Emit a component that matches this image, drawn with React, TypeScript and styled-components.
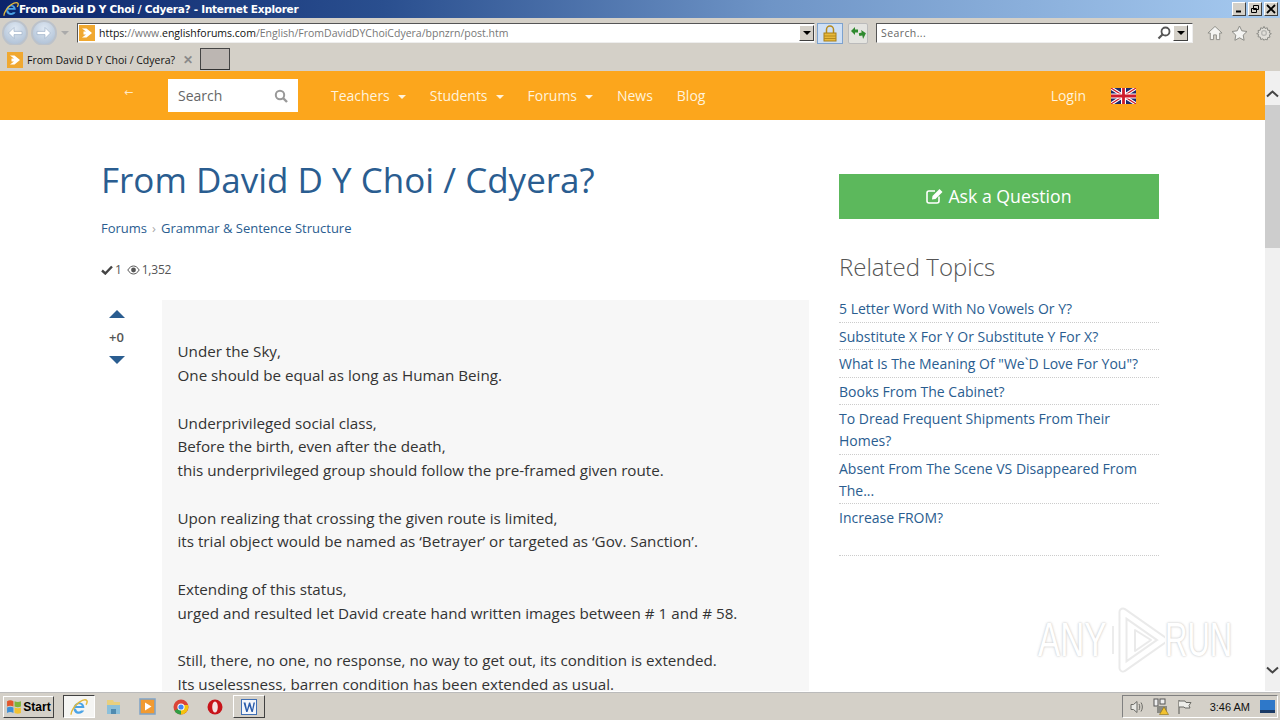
import React from "react";
import styled, { createGlobalStyle } from "styled-components";

const GlobalStyle = createGlobalStyle`
  html, body { margin: 0; padding: 0; height: 100%; overflow: hidden; background: #fff; }
  * { box-sizing: border-box; }
`;

const blue = "#2a5d90";

const Screen = styled.div`
  position: relative;
  width: 1280px;
  height: 720px;
  display: flex;
  flex-direction: column;
  overflow: hidden;
  font-family: "Open Sans", sans-serif;
`;

const TitleBar = styled.div`
  height: 18px;
  flex: none;
  display: flex;
  align-items: center;
  padding: 0 2px 0 3px;
  background: linear-gradient(90deg, #0b246b 0%, #2a4f8f 30%, #6e94c6 60%, #a6caf0 100%);
`;

const TitleText = styled.span`
  flex: 1;
  font: bold 10.5px "DejaVu Sans", sans-serif;
  letter-spacing: -0.27px;
  color: #fff;
  white-space: nowrap;
`;

const WinButtons = styled.div`
  display: flex;
  gap: 2px;
`;

const WinButton = styled.div`
  width: 14px;
  height: 14px;
  background: #d4d0c8;
  border: 1px solid;
  border-color: #fff #404040 #404040 #fff;
  display: flex;
  align-items: center;
  justify-content: center;
`;

const AddressRow = styled.div`
  height: 27px;
  flex: none;
  display: flex;
  align-items: center;
  background: #d4d0c8;
  padding: 3px 3px 0 2px;
`;

const NavButton = styled.div`
  width: 26px;
  height: 26px;
  flex: none;
  border-radius: 50%;
  margin-right: 3px;
  display: flex;
  align-items: center;
  justify-content: center;
  border: 2px solid #bcc2ca;
  background: radial-gradient(circle at 50% 30%, #dfe8f2, #a8bbd2);
`;

const SmallCaret = styled.div`
  width: 0;
  height: 0;
  margin: 0 8px 0 1px;
  border-left: 4px solid transparent;
  border-right: 4px solid transparent;
  border-top: 4px solid #aaa;
`;

const Field = styled.div<{ $width: number }>`
  width: ${(p) => p.$width}px;
  height: 20px;
  flex: none;
  display: flex;
  align-items: center;
  background: #fff;
  border: 1px solid;
  border-color: #555 #eee #eee #555;
`;

const Favicon = styled.div`
  width: 16px;
  height: 16px;
  flex: none;
  margin-left: 1px;
  background: #f0a830;
  display: flex;
  align-items: center;
  justify-content: center;
`;

const UrlText = styled.div`
  flex: 1;
  margin-left: 4px;
  font: 10.5px "Open Sans", sans-serif;
  color: #777;
  white-space: nowrap;
  overflow: hidden;
  b {
    font-weight: 400;
    color: #111;
  }
`;

const DropButton = styled.div<{ $inset?: number }>`
  width: 15px;
  height: 16px;
  flex: none;
  margin-right: ${(p) => p.$inset ?? 0}px;
  background: #d4d0c8;
  border: 1px solid;
  border-color: #fff #404040 #404040 #fff;
  display: flex;
  align-items: center;
  justify-content: center;
  &::after {
    content: "";
    border-left: 4px solid transparent;
    border-right: 4px solid transparent;
    border-top: 4px solid #000;
  }
`;

const LockTile = styled.div`
  width: 26px;
  height: 21px;
  margin: 0 5px 0 2px;
  flex: none;
  display: flex;
  align-items: center;
  justify-content: center;
  background: #cfe0f5;
  border: 1px solid #7da2ce;
`;

const RefreshTile = styled.div`
  width: 20px;
  height: 21px;
  margin-right: 8px;
  flex: none;
  display: flex;
  align-items: center;
  justify-content: center;
  background: #e4e4e0;
  border: 1px solid #bbb;
  border-radius: 2px;
`;

const SearchHint = styled.span`
  flex: 1;
  margin-left: 4px;
  font: 10.5px "Open Sans", sans-serif;
  letter-spacing: 0.4px;
  color: #666;
`;

const ToolIcons = styled.div`
  display: flex;
  align-items: center;
  gap: 8px;
  margin-left: 14px;
`;

const TabRow = styled.div`
  height: 26px;
  flex: none;
  display: flex;
  align-items: flex-end;
  background: #d4d0c8;
  padding: 0 0 1px 6px;
`;

const Tab = styled.div`
  height: 24px;
  width: 194px;
  display: flex;
  align-items: center;
  padding-top: 4px;
`;

const TabLabel = styled.span`
  margin-left: 4px;
  flex: 1;
  font: 10.5px "Open Sans", sans-serif;
  color: #111;
  white-space: nowrap;
`;

const TabClose = styled.span`
  margin-right: 7px;
  font: bold 12px "Liberation Sans", sans-serif;
  color: #8a8a8a;
`;

const NewTab = styled.div`
  width: 30px;
  height: 22px;
  background: #bcb6b2;
  border: 1px solid;
  border-color: #444 #444 #333 #444;
`;

const Viewport = styled.div`
  flex: 1;
  min-height: 0;
  display: flex;
`;

const Page = styled.div`
  flex: 1;
  min-width: 0;
  overflow: hidden;
  background: #fff;
`;

const Header = styled.header`
  height: 49px;
  display: flex;
  align-items: center;
  background: #fca61c;
  padding-left: 124px;
  padding-right: 129px;
`;

const BackArrow = styled.span`
  width: 44px;
  font: 11px "DejaVu Sans", sans-serif;
  margin-top: -6px;
  color: #ffe9c4;
`;

const SearchBox = styled.div`
  width: 130px;
  height: 33px;
  display: flex;
  align-items: center;
  justify-content: space-between;
  padding: 0 10px;
  background: #fff;
  font-size: 14px;
  color: #666;
`;

const Nav = styled.nav`
  flex: 1;
  display: flex;
  align-items: center;
  gap: 24px;
  margin-left: 33px;
`;

const NavItem = styled.span`
  display: flex;
  align-items: center;
  font-size: 14px;
  letter-spacing: -0.02px;
  color: #fff3dc;
  &[data-caret="true"]::after {
    content: "";
    margin-left: 8px;
    margin-top: 2px;
    border-left: 4px solid transparent;
    border-right: 4px solid transparent;
    border-top: 4px solid #fff3dc;
  }
`;

const Login = styled(NavItem)`
  margin-right: 25px;
`;

const Content = styled.div`
  display: flex;
  padding: 34px 0 0 101px;
`;

const Main = styled.main`
  width: 708px;
  flex: none;
`;

const Title = styled.h1`
  margin: 1px 0 0;
  font-size: 35px;
  font-weight: 400;
  line-height: 50px;
  color: ${blue};
  white-space: nowrap;
`;

const Crumbs = styled.div`
  display: flex;
  align-items: center;
  margin-top: 13px;
  font-size: 13px;
  line-height: 20px;
  color: ${blue};
`;

const CrumbSep = styled.span`
  margin: 0 5px;
  font-size: 13px;
  color: #aaa;
`;

const Stats = styled.div`
  display: flex;
  align-items: center;
  margin-top: 22px;
  font-size: 12px;
  line-height: 20px;
  letter-spacing: -0.2px;
  color: #555;
  svg {
    margin-right: 2px;
  }
  span {
    margin-right: 5px;
  }
`;

const Post = styled.div`
  display: flex;
  margin-top: 20px;
`;

const Votes = styled.div`
  width: 61px;
  flex: none;
  padding: 10px 30px 0 0;
  display: flex;
  flex-direction: column;
  align-items: center;
`;

const VoteArrow = styled.div<{ $down?: boolean }>`
  width: 0;
  height: 0;
  border-left: 8px solid transparent;
  border-right: 8px solid transparent;
  ${(p) =>
    p.$down
      ? `border-top: 8px solid ${blue};`
      : `border-bottom: 8px solid ${blue};`}
`;

const Score = styled.div`
  margin: 9px 0 9px;
  font-size: 13px;
  font-weight: 600;
  line-height: 20px;
  color: #555;
`;

const PostBody = styled.div`
  flex: 1;
  min-height: 420px;
  padding: 40.4px 16px 0 15.5px;
  background: #f7f7f7;
  font-size: 15.2px;
  line-height: 23.75px;
  color: #333;
`;

const Stanza = styled.p`
  margin: 0 0 23.75px;
  white-space: nowrap;
`;

const Side = styled.aside`
  width: 320px;
  margin-left: 30px;
  padding-top: 20px;
  flex: none;
`;

const AskButton = styled.div`
  height: 45px;
  display: flex;
  align-items: center;
  justify-content: center;
  gap: 4px;
  padding-bottom: 2px;
  background: #5cb85c;
  font-size: 17.7px;
  color: #fff;
`;

const SideTitle = styled.h2`
  margin: 28px 0 8px;
  font-size: 24px;
  font-weight: 300;
  line-height: 40px;
  color: #555;
`;

const TopicList = styled.ul`
  margin: 0;
  padding: 0 0 24px;
  list-style: none;
  border-bottom: 1px dotted #ccc;
`;

const Topic = styled.li`
  padding: 3px 0 1.5px;
  font-size: 14px;
  line-height: 22px;
  color: ${blue};
  border-bottom: 1px dotted #ccc;
  &:last-child {
    border-bottom: 0;
  }
`;

const ScrollBar = styled.div`
  width: 15px;
  flex: none;
  display: flex;
  flex-direction: column;
  align-items: center;
  background: #f0f0f0;
`;

const ScrollEnd = styled.div<{ $bottom?: boolean }>`
  height: 34px;
  flex: none;
  display: flex;
  align-items: center;
  justify-content: center;
  ${(p) => (p.$bottom ? "padding-bottom: 8px;" : "padding-top: 12px;")}
`;

const ScrollThumb = styled.div`
  width: 15px;
  height: 143px;
  flex: none;
  background: #cdcdcd;
`;

const ScrollFill = styled.div`
  flex: 1;
`;

const Taskbar = styled.footer`
  height: 29px;
  flex: none;
  display: flex;
  align-items: center;
  padding: 1px 2px 0 3px;
  background: #d4d0c8;
  border-top: 1px solid #fff;
  box-shadow: inset 0 1px 0 #bbb;
`;

const StartButton = styled.div`
  width: 51px;
  height: 22px;
  display: flex;
  align-items: center;
  justify-content: center;
  gap: 1px;
  margin-right: 8px;
  background: #d4d0c8;
  border: 1px solid;
  border-color: #fff #404040 #404040 #fff;
  font: bold 12px "Liberation Sans", sans-serif;
  color: #000;
`;

const TaskSlot = styled.div<{ $state?: "active" | "raised" }>`
  width: 32px;
  height: 23px;
  margin: 0 1px;
  display: flex;
  align-items: center;
  justify-content: center;
  border: 1px solid transparent;
  ${(p) =>
    p.$state === "active"
      ? "background: #f5f5f3; border-color: #404040 #fff #fff #404040;"
      : ""}
  ${(p) =>
    p.$state === "raised"
      ? "background: #d4d0c8; border-color: #fff #404040 #404040 #fff;"
      : ""}
`;

const TaskGrow = styled.div`
  flex: 1;
`;

const Tray = styled.div`
  width: 156px;
  height: 23px;
  display: flex;
  align-items: center;
  padding: 0 2px 0 6px;
  border: 1px solid;
  border-color: #808080 #fff #fff #808080;
`;

const Clock = styled.span`
  margin-left: auto;
  margin-right: 10px;
  font: 11px "Liberation Sans", sans-serif;
  color: #111;
`;

const TrayIcons = styled.div`
  display: flex;
  align-items: center;
  gap: 8px;
`;

const Watermark = styled.div`
  position: absolute;
  left: 1038px;
  top: 606px;
  display: flex;
  align-items: center;
  font: 45px "Liberation Sans", sans-serif;
  color: #fff;
  text-shadow: 0 0 2px #bbb, 0 0 3px #ccc;
  opacity: 0.75;
  pointer-events: none;
`;

const WatermarkWord = styled.span<{ $squeeze: number }>`
  display: inline-block;
  width: 67px;
  transform-origin: left center;
  transform: scaleX(${(p) => p.$squeeze}) scaleY(1.05);
`;

const FaviconGlyph = () => (
  <svg width="12" height="12" viewBox="0 0 12 12">
    <path d="M1 1.500h4.500l5.500 4.500-5.500 4.500H1l4-3H2.500v-3H5z" fill="#fff" />
  </svg>
);

const IeLogo = ({ size = 16 }: { size?: number }) => (
  <svg width={size} height={size} viewBox="0 0 16 16">
    <path
      d="M3.500 8.800h9.300C12.800 5.900 10.900 4 8.300 4 5.600 4 3.500 6 3.200 8.800c-.3 3 1.800 5.200 4.700 5.200 2.200 0 3.900-1 4.700-2.800h-2.800c-.5.600-1.100.9-1.900.9-1.400 0-2.300-1-2.400-2.300zm2.100-1.700c.3-1 1.300-1.600 2.500-1.600s2.100.6 2.400 1.600z"
      fill="#4aa3e6"
      fillRule="evenodd"
    />
    <path
      d="M1.200 14.800C.2 12.800 4 6.500 8 3.800c3-2 6-2.800 7-1.400.5.900.1 2.200-.8 3.600"
      fill="none"
      stroke="#e2b93c"
      strokeWidth="1.300"
    />
  </svg>
);

const NavArrow = ({ flip }: { flip?: boolean }) => (
  <svg width="16" height="14" viewBox="0 0 16 14" style={flip ? { transform: "scaleX(-1)" } : undefined}>
    <path d="M7 1.500 1.500 7 7 12.500V8.600h8V5.400H7z" fill="#fff" stroke="#9fb2c9" strokeWidth="0.700" />
  </svg>
);

const Lock = () => (
  <svg width="14" height="17" viewBox="0 0 14 17">
    <path d="M3.500 8V4.500a3.500 3.500 0 0 1 7 0V8" fill="none" stroke="#b58a1e" strokeWidth="1.500" />
    <rect x="1" y="8" width="12" height="8" fill="#e8b93a" stroke="#a87f18" strokeWidth="1" />
    <path d="M1 11h12M1 13.500h12" stroke="#b58a1e" strokeWidth="1" />
  </svg>
);

const Refresh = () => (
  <svg width="17" height="14" viewBox="0 0 17 14">
    <path d="M1 5 5 1v2.500h3v3H5V9z" fill="#2f8a2f" />
    <path d="M16 8l-4-4v2.500H9v3h3V13z" fill="#2f8a2f" transform="rotate(-12 12 8)" />
  </svg>
);

const Magnifier = () => (
  <svg width="14" height="14" viewBox="0 0 14 14" style={{ marginRight: 2 }}>
    <circle cx="8.500" cy="5.500" r="4" fill="none" stroke="#555" strokeWidth="1.800" />
    <path d="M5.500 8.500 1.500 12.500" stroke="#555" strokeWidth="2.200" />
  </svg>
);

const SearchGlass = () => (
  <svg width="14" height="14" viewBox="0 0 14 14">
    <circle cx="6" cy="6" r="4.200" fill="none" stroke="#999" strokeWidth="2" />
    <path d="M9 9l4 4" stroke="#999" strokeWidth="2.400" />
  </svg>
);

const Home = () => (
  <svg width="16" height="16" viewBox="0 0 17 16">
    <path d="M8.500 1 1 8h2.500v7h3.500v-5h3v5h3.500V8H16z" fill="#f4f4f2" stroke="#8d8d88" strokeWidth="1" />
  </svg>
);

const Star = () => (
  <svg width="17" height="16" viewBox="0 0 17 16">
    <path
      d="M8.500 1l2.300 4.800 5.200.7-3.800 3.600.9 5.200-4.600-2.500-4.600 2.500.9-5.200L1 6.500l5.200-.7z"
      fill="#f4f4f2"
      stroke="#8d8d88"
      strokeWidth="1"
    />
  </svg>
);

const Gear = () => (
  <svg width="16" height="16" viewBox="0 0 24 24">
    <circle cx="12" cy="12" r="3.500" fill="none" stroke="#8d8d88" strokeWidth="2" />
    <path
      d="M12 2l1.500 3.200 3.400-1 .6 3.500 3.500.6-1 3.400L23 13l-3 1.800 1 3.400-3.500.6-.6 3.500-3.400-1L12 23l-1.500-2.300-3.400 1-.6-3.500-3.500-.6 1-3.400L1 13l3-1.300-1-3.400 3.500-.6.600-3.500 3.400 1z"
      fill="#f4f4f2"
      fillOpacity="0.4"
      stroke="#8d8d88"
      strokeWidth="1.500"
    />
  </svg>
);

const UkFlag = () => (
  <svg width="25" height="16" viewBox="0 0 25 16">
    <rect width="25" height="16" fill="#1c2a6b" />
    <path d="M0 0l25 16M25 0 0 16" stroke="#fff" strokeWidth="3.400" />
    <path d="M0 0l25 16M25 0 0 16" stroke="#cf1b2b" strokeWidth="1.200" />
    <path d="M12.500 0v16M0 8h25" stroke="#fff" strokeWidth="5" />
    <path d="M12.500 0v16M0 8h25" stroke="#cf1b2b" strokeWidth="2.800" />
  </svg>
);

const Check = () => (
  <svg width="12" height="10" viewBox="0 0 12 10">
    <path d="M1 5.500 4.300 8.500 11 1.500" fill="none" stroke="#444" strokeWidth="2.400" />
  </svg>
);

const Eye = () => (
  <svg width="13" height="10" viewBox="0 0 13 10">
    <path d="M.8 5C2.500 2.300 4.300 1 6.500 1s4 1.300 5.700 4c-1.700 2.700-3.500 4-5.700 4S2.500 7.700.8 5z" fill="none" stroke="#555" strokeWidth="1" />
    <circle cx="6.500" cy="5" r="2.400" fill="#555" />
  </svg>
);

const EditIcon = () => (
  <svg width="18" height="16" viewBox="0 0 18 16">
    <path d="M13 8.500V13a2 2 0 0 1-2 2H3a2 2 0 0 1-2-2V5a2 2 0 0 1 2-2h6" fill="none" stroke="#fff" strokeWidth="1.600" />
    <path d="M6.500 8l7-7 3 3-7 7-3.500.5z" fill="#fff" />
  </svg>
);

const Chevron = ({ down }: { down?: boolean }) => (
  <svg width="13" height="8" viewBox="0 0 13 8">
    <path d={down ? "M1 1.500 6.500 6.500 12 1.500" : "M1 6.500 6.500 1.500 12 6.500"} fill="none" stroke="#444" strokeWidth="2" />
  </svg>
);

const WindowsFlag = () => (
  <svg width="16" height="15" viewBox="0 0 15 14">
    <path d="M1 2c2-1 4-1 6 0v5C5 6 3 6 1 7z" fill="#e2572b" />
    <path d="M8 2c2 1 4 1 6 0v5c-2 1-4 1-6 0z" fill="#7db53a" />
    <path d="M1 8c2-1 4-1 6 0v5c-2-1-4-1-6 0z" fill="#3e8fd6" />
    <path d="M8 8c2 1 4 1 6 0v5c-2 1-4 1-6 0z" fill="#f2c230" />
  </svg>
);

const ExplorerIcon = () => (
  <svg width="17" height="16" viewBox="0 0 17 16">
    <path d="M2 1h6l1 2h6v5H2z" fill="#e8cf7e" />
    <path d="M2 6h13v9H2z" fill="#8cc0da" />
    <path d="M6 15v-5h5v5z" fill="#4f8bb0" />
  </svg>
);

const MediaIcon = () => (
  <svg width="17" height="17" viewBox="0 0 17 17">
    <rect x="1" y="1" width="15" height="15" fill="#f19a31" stroke="#7da2c8" strokeWidth="1.500" />
    <path d="M6 4.500 12.500 8.500 6 12.500z" fill="#fff" />
  </svg>
);

const ChromeIcon = () => (
  <svg width="16" height="16" viewBox="0 0 16 16">
    <circle cx="8" cy="8" r="7.500" fill="#db4437" />
    <path d="M8 8 1.500 11.700A7.500 7.500 0 0 0 8 15.500z" fill="#2f9e44" />
    <path d="M8 8v7.500A7.500 7.500 0 0 0 15 6H8z" fill="#f4c20d" />
    <circle cx="8" cy="8" r="3.600" fill="#fff" />
    <circle cx="8" cy="8" r="2.600" fill="#4285f4" />
  </svg>
);

const OperaIcon = () => (
  <svg width="16" height="16" viewBox="0 0 16 16">
    <circle cx="8" cy="8" r="7.500" fill="#c8141a" />
    <ellipse cx="8" cy="8" rx="2.800" ry="5.500" fill="#f4e3e3" />
  </svg>
);

const WordIcon = () => (
  <svg width="18" height="18" viewBox="0 0 18 18">
    <rect x="1.500" y="1.500" width="15" height="15" fill="#f3f6fb" stroke="#3f6fb5" />
    <path d="M3.500 4.500h2l1.500 7 2-7h1.200l2 7 1.300-7h1.500l-2.200 9.500h-1.300L9.500 8l-2 6H6.200z" fill="#2a5cab" />
  </svg>
);

const Speaker = () => (
  <svg width="16" height="16" viewBox="0 0 16 16">
    <path d="M2 5.500h2.500L8 2.500v11l-3.500-3H2z" fill="#e8e8e4" stroke="#6b6b66" />
    <path d="M10 5c1 1.800 1 4.200 0 6M12 3.500c1.800 2.700 1.800 6.300 0 9" fill="none" stroke="#6b6b66" />
  </svg>
);

const NetworkWarn = () => (
  <svg width="16" height="17" viewBox="0 0 16 17">
    <rect x="1" y="1" width="4" height="7" fill="#eee" stroke="#555" />
    <rect x="7" y="1" width="5" height="5" fill="#eee" stroke="#555" />
    <rect x="4" y="8" width="10" height="7" fill="#8a8a84" />
    <path d="M11 9l4.500 7.500h-9z" fill="#f2c230" stroke="#8a6d10" strokeWidth="0.600" />
  </svg>
);

const FlagTray = () => (
  <svg width="15" height="16" viewBox="0 0 15 16">
    <path d="M2 1v14" stroke="#6b6b66" strokeWidth="1.200" />
    <path d="M2 2h6l1 1.500h5l-2 3 1 2.500H8L7 8H2" fill="#eeeeea" stroke="#6b6b66" />
  </svg>
);

const Desktop = () => (
  <svg width="15" height="13" viewBox="0 0 15 13">
    <rect width="15" height="13" fill="#2e78c9" />
    <rect y="10" width="15" height="3" fill="#1b3b66" />
  </svg>
);

const WatermarkMark = () => (
  <svg width="60" height="68" viewBox="0 0 60 68">
    <g fill="none" strokeLinejoin="round">
      <path d="M18 6 58 34 18 62 Z" stroke="#e4e4e4" strokeWidth="9" />
      <path d="M18 6 58 34 18 62 Z" stroke="#fff" strokeWidth="5" />
      <path d="M30 24 46 34 30 45 Z" stroke="#e4e4e4" strokeWidth="2" />
      <path d="M8 20v28" stroke="#e6e6e6" strokeWidth="2" />
    </g>
  </svg>
);

const stanzas = [
  ["Under the Sky,", "One should be equal as long as Human Being."],
  [
    "Underprivileged social class,",
    "Before the birth, even after the death,",
    "this underprivileged group should follow the pre-framed given route.",
  ],
  [
    "Upon realizing that crossing the given route is limited,",
    "its trial object would be named as ‘Betrayer’ or targeted as ‘Gov. Sanction’.",
  ],
  [
    "Extending of this status,",
    "urged and resulted let David create hand written images between # 1 and # 58.",
  ],
  [
    "Still, there, no one, no response, no way to get out, its condition is extended.",
    "Its uselessness, barren condition has been extended as usual.",
  ],
];

const topics = [
  "5 Letter Word With No Vowels Or Y?",
  "Substitute X For Y Or Substitute Y For X?",
  'What Is The Meaning Of "We`D Love For You"?',
  "Books From The Cabinet?",
  "To Dread Frequent Shipments From Their Homes?",
  "Absent From The Scene VS Disappeared From The...",
  "Increase FROM?",
];

export default function App() {
  return (
    <Screen>
      <GlobalStyle />
      <TitleBar>
        <IeLogo />
        <TitleText>From David D Y Choi / Cdyera? - Internet Explorer</TitleText>
        <WinButtons>
          <WinButton>
            <svg width="8" height="8" viewBox="0 0 8 8">
              <path d="M1 6.500h5" stroke="#000" strokeWidth="2" />
            </svg>
          </WinButton>
          <WinButton>
            <svg width="10" height="10" viewBox="0 0 10 10">
              <path d="M3.500 1.500h5v4h-5zM1.500 4.500h5v4h-5z" fill="#d4d0c8" stroke="#000" />
            </svg>
          </WinButton>
          <WinButton>
            <svg width="10" height="10" viewBox="0 0 10 10">
              <path d="M1 1l8 8M9 1 1 9" stroke="#000" strokeWidth="1.800" />
            </svg>
          </WinButton>
        </WinButtons>
      </TitleBar>

      <AddressRow>
        <NavButton>
          <NavArrow />
        </NavButton>
        <NavButton>
          <NavArrow flip />
        </NavButton>
        <SmallCaret />
        <Field $width={738}>
          <Favicon>
            <FaviconGlyph />
          </Favicon>
          <UrlText>
            <b>https:</b>//www.<b>englishforums.com</b>/English/FromDavidDYChoiCdyera/bpnzrn/post.htm
          </UrlText>
          <DropButton />
        </Field>
        <LockTile>
          <Lock />
        </LockTile>
        <RefreshTile>
          <Refresh />
        </RefreshTile>
        <Field $width={317}>
          <SearchHint>Search...</SearchHint>
          <Magnifier />
          <DropButton $inset={4} />
        </Field>
        <ToolIcons>
          <Home />
          <Star />
          <Gear />
        </ToolIcons>
      </AddressRow>

      <TabRow>
        <Tab>
          <Favicon>
            <FaviconGlyph />
          </Favicon>
          <TabLabel>From David D Y Choi / Cdyera?</TabLabel>
          <TabClose>✕</TabClose>
        </Tab>
        <NewTab />
      </TabRow>

      <Viewport>
        <Page>
          <Header>
            <BackArrow>←</BackArrow>
            <SearchBox>
              Search
              <SearchGlass />
            </SearchBox>
            <Nav>
              <NavItem data-caret="true">Teachers</NavItem>
              <NavItem data-caret="true">Students</NavItem>
              <NavItem data-caret="true">Forums</NavItem>
              <NavItem>News</NavItem>
              <NavItem>Blog</NavItem>
            </Nav>
            <Login>Login</Login>
            <UkFlag />
          </Header>
          <Content>
            <Main>
              <Title>From David D Y Choi / Cdyera?</Title>
              <Crumbs>
                Forums
                <CrumbSep>›</CrumbSep>
                Grammar &amp; Sentence Structure
              </Crumbs>
              <Stats>
                <Check />
                <span>1</span>
                <Eye />
                1,352
              </Stats>
              <Post>
                <Votes>
                  <VoteArrow />
                  <Score>+0</Score>
                  <VoteArrow $down />
                </Votes>
                <PostBody>
                  {stanzas.map((lines) => (
                    <Stanza key={lines[0]}>
                      {lines.map((line) => (
                        <React.Fragment key={line}>
                          {line}
                          <br />
                        </React.Fragment>
                      ))}
                    </Stanza>
                  ))}
                </PostBody>
              </Post>
            </Main>
            <Side>
              <AskButton>
                <EditIcon />
                Ask a Question
              </AskButton>
              <SideTitle>Related Topics</SideTitle>
              <TopicList>
                {topics.map((t) => (
                  <Topic key={t}>{t}</Topic>
                ))}
              </TopicList>
            </Side>
          </Content>
        </Page>
        <ScrollBar>
          <ScrollEnd>
            <Chevron />
          </ScrollEnd>
          <ScrollThumb />
          <ScrollFill />
          <ScrollEnd $bottom>
            <Chevron down />
          </ScrollEnd>
        </ScrollBar>
      </Viewport>

      <Taskbar>
        <StartButton>
          <WindowsFlag />
          Start
        </StartButton>
        <TaskSlot $state="active">
          <IeLogo size={18} />
        </TaskSlot>
        <TaskSlot>
          <ExplorerIcon />
        </TaskSlot>
        <TaskSlot>
          <MediaIcon />
        </TaskSlot>
        <TaskSlot>
          <ChromeIcon />
        </TaskSlot>
        <TaskSlot>
          <OperaIcon />
        </TaskSlot>
        <TaskSlot $state="raised">
          <WordIcon />
        </TaskSlot>
        <TaskGrow />
        <Tray>
          <TrayIcons>
            <Speaker />
            <NetworkWarn />
            <FlagTray />
          </TrayIcons>
          <Clock>3:46 AM</Clock>
          <Desktop />
        </Tray>
      </Taskbar>

      <Watermark>
        <WatermarkWord $squeeze={0.74}>ANY</WatermarkWord>
        <WatermarkMark />
        <WatermarkWord $squeeze={0.69}>RUN</WatermarkWord>
      </Watermark>
    </Screen>
  );
}
